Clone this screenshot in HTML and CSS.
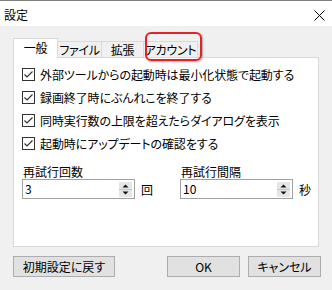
FILE: index.html
```html
<!DOCTYPE html>
<html lang="ja">
<head>
  <meta charset="UTF-8">
  <title>設定</title>
  <link rel="stylesheet" href="styles.css">
</head>
<body>

<div class="window">
  <div class="titlebar">
    <span class="title">設定</span>
    <svg class="close" width="11" height="11" viewBox="0 0 11 11">
      <path d="M0.5 0.5L10.5 10.5M10.5 0.5L0.5 10.5" stroke="#000" stroke-width="1"/>
    </svg>
  </div>

  <div class="tabs">
    <div class="tab active">一般</div>
    <div class="tab">ファイル</div>
    <div class="tab">拡張</div>
    <div class="tab">アカウント<span class="highlight"></span></div>
  </div>

  <div class="panel">
    <label class="check"><span class="box"><svg width="13" height="13" viewBox="0 0 13 13"><rect x="0.5" y="0.5" width="12" height="12" fill="#fff" stroke="#333"/><path d="M2.5 6.5L5 9L10.5 3.5" fill="none" stroke="#333" stroke-width="1.2"/></svg></span>外部ツールからの起動時は最小化状態で起動する</label>
    <label class="check"><span class="box"><svg width="13" height="13" viewBox="0 0 13 13"><rect x="0.5" y="0.5" width="12" height="12" fill="#fff" stroke="#333"/><path d="M2.5 6.5L5 9L10.5 3.5" fill="none" stroke="#333" stroke-width="1.2"/></svg></span>録画終了時にぶんれこを終了する</label>
    <label class="check"><span class="box"><svg width="13" height="13" viewBox="0 0 13 13"><rect x="0.5" y="0.5" width="12" height="12" fill="#fff" stroke="#333"/><path d="M2.5 6.5L5 9L10.5 3.5" fill="none" stroke="#333" stroke-width="1.2"/></svg></span>同時実行数の上限を超えたらダイアログを表示</label>
    <label class="check"><span class="box"><svg width="13" height="13" viewBox="0 0 13 13"><rect x="0.5" y="0.5" width="12" height="12" fill="#fff" stroke="#333"/><path d="M2.5 6.5L5 9L10.5 3.5" fill="none" stroke="#333" stroke-width="1.2"/></svg></span>起動時にアップデートの確認をする</label>

    <div class="retry">
      <div class="field">
        <div class="field-label">再試行回数</div>
        <div class="field-row">
          <div class="spin">
            <span class="spin-value">3</span>
            <svg class="spin-buttons" width="13" height="15" viewBox="0 0 13 15"><rect width="13" height="15" fill="#e6e6e6"/><line x1="0" y1="7.5" x2="13" y2="7.5" stroke="#c4c4c4"/><path d="M3.5 5.5h6L6.5 2.5z" fill="#111"/><path d="M3.5 9.5h6L6.5 12.5z" fill="#111"/></svg>
          </div>
          <span class="unit">回</span>
        </div>
      </div>
      <div class="field">
        <div class="field-label">再試行間隔</div>
        <div class="field-row">
          <div class="spin">
            <span class="spin-value">10</span>
            <svg class="spin-buttons" width="13" height="15" viewBox="0 0 13 15"><rect width="13" height="15" fill="#e6e6e6"/><line x1="0" y1="7.5" x2="13" y2="7.5" stroke="#c4c4c4"/><path d="M3.5 5.5h6L6.5 2.5z" fill="#111"/><path d="M3.5 9.5h6L6.5 12.5z" fill="#111"/></svg>
          </div>
          <span class="unit">秒</span>
        </div>
      </div>
    </div>
  </div>

  <div class="buttons">
    <button class="btn btn-wide">初期設定に戻す</button>
    <div class="spacer"></div>
    <button class="btn">OK</button>
    <button class="btn">キャンセル</button>
  </div>
</div>

</body>
</html>
```

FILE: styles.css
```css
body {
  margin: 0;
  padding: 0;
  font-family: "Noto Sans CJK JP", sans-serif;
  font-size: 12px;
  color: #000;
  background: #f0f0f0;
}

.window {
  width: 332px;
  height: 290px;
  border-top: 1px solid #808080;
  box-sizing: border-box;
  background: #f0f0f0;
}

.titlebar {
  height: 25px;
  background: #fff;
  display: flex;
  align-items: center;
  justify-content: space-between;
  padding: 0 7px 0 4px;
}

.title {
  line-height: 15px;
  margin-top: 1px;
}

.close {
  margin-top: 3px;
}

.tabs {
  display: flex;
  align-items: flex-end;
  margin: 12px 0 0 13px;
  height: 19px;
}

.tab {
  position: relative;
  height: 16px;
  line-height: 15px;
  padding: 0;
  border: 1px solid #d9d9d9;
  border-bottom: none;
  margin-left: -1px;
  background: #f0f0f0;
  font-feature-settings: "palt";
  letter-spacing: -0.3px;
  white-space: nowrap;
  box-sizing: border-box;
  text-align: center;
}

.tab:nth-child(1) { width: 45px; }
.tab:nth-child(2) { width: 45px; }
.tab:nth-child(3) { width: 43px; }
.tab:nth-child(4) { width: 55px; }

.tab.active {
  height: 20px;
  margin-left: 0;
  margin-bottom: -1px;
  background: #fff;
  z-index: 1;
  line-height: 17px;
}

.highlight {
  position: absolute;
  left: 1px;
  top: -10px;
  width: 57px;
  height: 29px;
  box-sizing: border-box;
  border: 2px solid #e5202b;
  border-radius: 6px;
  box-shadow: 1px 1px 2px rgba(0, 0, 0, 0.3);
  z-index: 2;
}

.panel {
  margin: 0 13px;
  height: 190px;
  box-sizing: border-box;
  background: #fff;
  border: 1px solid #d9d9d9;
  padding: 5px 8px 0 8px;
}

.check {
  display: flex;
  align-items: center;
  height: 23px;
  font-feature-settings: "palt";
  letter-spacing: -0.1px;
}

.box {
  display: flex;
  width: 13px;
  height: 13px;
  margin-right: 5px;
}

.retry {
  display: grid;
  grid-template-columns: 158px auto;
  margin-top: 9px;
}

.field-label {
  line-height: 15px;
  padding-left: 1px;
}

.field-row {
  display: flex;
  align-items: center;
  gap: 6px;
}

.spin {
  width: 113px;
  height: 20px;
  box-sizing: border-box;
  border: 1px solid #a0a0a0;
  background: #fff;
  display: flex;
  align-items: center;
  justify-content: space-between;
  padding: 0 2px 0 2px;
}

.spin-value {
  line-height: 16px;
}

.unit {
  line-height: 15px;
}

.buttons {
  display: flex;
  margin: 9px 11px 0 13px;
  gap: 8px;
}

.spacer {
  flex: 1;
}

.btn {
  width: 73px;
  height: 21px;
  padding: 0;
  font-family: "Noto Sans CJK JP", sans-serif;
  font-size: 12px;
  color: #000;
  background: #e1e1e1;
  border: 1px solid #adadad;
  font-feature-settings: "palt";
}

.btn-wide {
  width: 102px;
}
```
